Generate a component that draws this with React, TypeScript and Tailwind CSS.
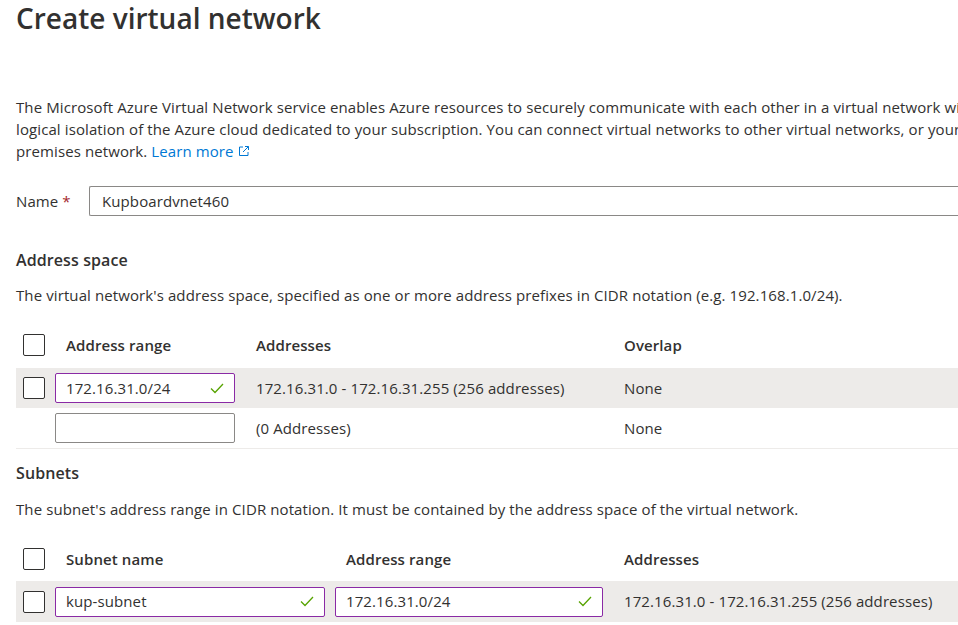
import React from "react";

const font = { fontFamily: '"Open Sans", "Noto Sans", sans-serif' };

const Check = () => (
  <svg width="14" height="11" viewBox="0 0 14 11" fill="none">
    <path d="M1 5.5L5 9.5L13 1" stroke="#57a300" strokeWidth="1.3" />
  </svg>
);

const Checkbox = () => (
  <div className="w-[22px] h-[22px] border border-[#323130] rounded-[2px] bg-white" />
);

const Field = ({ value, width, valid }: { value: string; width: string; valid?: boolean }) => (
  <div
    className={`${width} h-[30px] flex items-center justify-between px-[10px] bg-white rounded-[2px] border ${
      valid ? "border-[#8a2aa5]" : "border-[#8a8886]"
    }`}
  >
    <span>{value}</span>
    {valid && <Check />}
  </div>
);

const App = () => {
  return (
    <div className="w-[958px] h-[625px] overflow-hidden bg-white text-[#323130] text-[15px] tracking-[0.1px]" style={font}>
      <div className="pl-4">
        <h1 className="text-[28px] font-semibold leading-[36px] tracking-normal text-[#323130]">Create virtual network</h1>

        <p className="mt-[60px] leading-[22px] whitespace-nowrap">
          The Microsoft Azure Virtual Network service enables Azure resources to securely communicate with each other in a virtual network with the
          <br />
          logical isolation of the Azure cloud dedicated to your subscription. You can connect virtual networks to other virtual networks, or your on-
          <br />
          premises network.{" "}
          <span className="text-[#0078d4]">
            Learn more{" "}
            <svg width="12" height="12" viewBox="0 0 12 12" fill="none" className="inline-block -mt-1">
              <path d="M5 2H1.5V10.5H10V7" stroke="#0078d4" strokeWidth="1" />
              <path d="M7 1.5H10.5V5M10.5 1.5L5 7" stroke="#0078d4" strokeWidth="1" />
            </svg>
          </span>
        </p>

        <div className="mt-[24px] flex items-center">
          <div className="w-[73px]">
            Name <span className="text-[#a4262c]">*</span>
          </div>
          <div className="flex-1 h-[30px] flex items-center px-3 border border-[#8a8886] border-r-0 rounded-l-[2px]">
            Kupboardvnet460
          </div>
        </div>

        <h2 className="mt-[32px] text-[16px] font-semibold leading-[24px]">Address space</h2>
        <p className="mt-[12px] leading-[22px]">
          The virtual network's address space, specified as one or more address prefixes in CIDR notation (e.g. 192.168.1.0/24).
        </p>

        <div className="mt-[22px]">
          <div className="grid grid-cols-[39px_201px_368px_1fr] items-center h-[34px] font-semibold">
            <div className="pl-[7px]"><Checkbox /></div>
            <div className="pl-[11px]">Address range</div>
            <div>Addresses</div>
            <div>Overlap</div>
          </div>
          <div className="grid grid-cols-[39px_201px_368px_1fr] items-center h-[40px] mt-[6px] bg-[#edebe9]">
            <div className="pl-[7px]"><Checkbox /></div>
            <Field value="172.16.31.0/24" width="w-[180px]" valid />
            <div>172.16.31.0 - 172.16.31.255 (256 addresses)</div>
            <div>None</div>
          </div>
          <div className="grid grid-cols-[39px_201px_368px_1fr] items-center h-[41px] border-b border-[#edebe9]">
            <div />
            <Field value="" width="w-[180px]" />
            <div>(0 Addresses)</div>
            <div>None</div>
          </div>
        </div>

        <h2 className="mt-[12px] text-[16px] font-semibold leading-[24px]">Subnets</h2>
        <p className="mt-[13px] leading-[22px]">
          The subnet's address range in CIDR notation. It must be contained by the address space of the virtual network.
        </p>

        <div className="mt-[22px]">
          <div className="grid grid-cols-[39px_280px_289px_1fr] items-center h-[34px] font-semibold">
            <div className="pl-[7px]"><Checkbox /></div>
            <div className="pl-[11px]">Subnet name</div>
            <div className="pl-[11px]">Address range</div>
            <div>Addresses</div>
          </div>
          <div className="grid grid-cols-[39px_280px_289px_1fr] items-center h-[41px] mt-[5px] bg-[#edebe9]">
            <div className="pl-[7px]"><Checkbox /></div>
            <Field value="kup-subnet" width="w-[270px]" valid />
            <Field value="172.16.31.0/24" width="w-[268px]" valid />
            <div>172.16.31.0 - 172.16.31.255 (256 addresses)</div>
          </div>
        </div>
      </div>
    </div>
  );
};

export default App;
